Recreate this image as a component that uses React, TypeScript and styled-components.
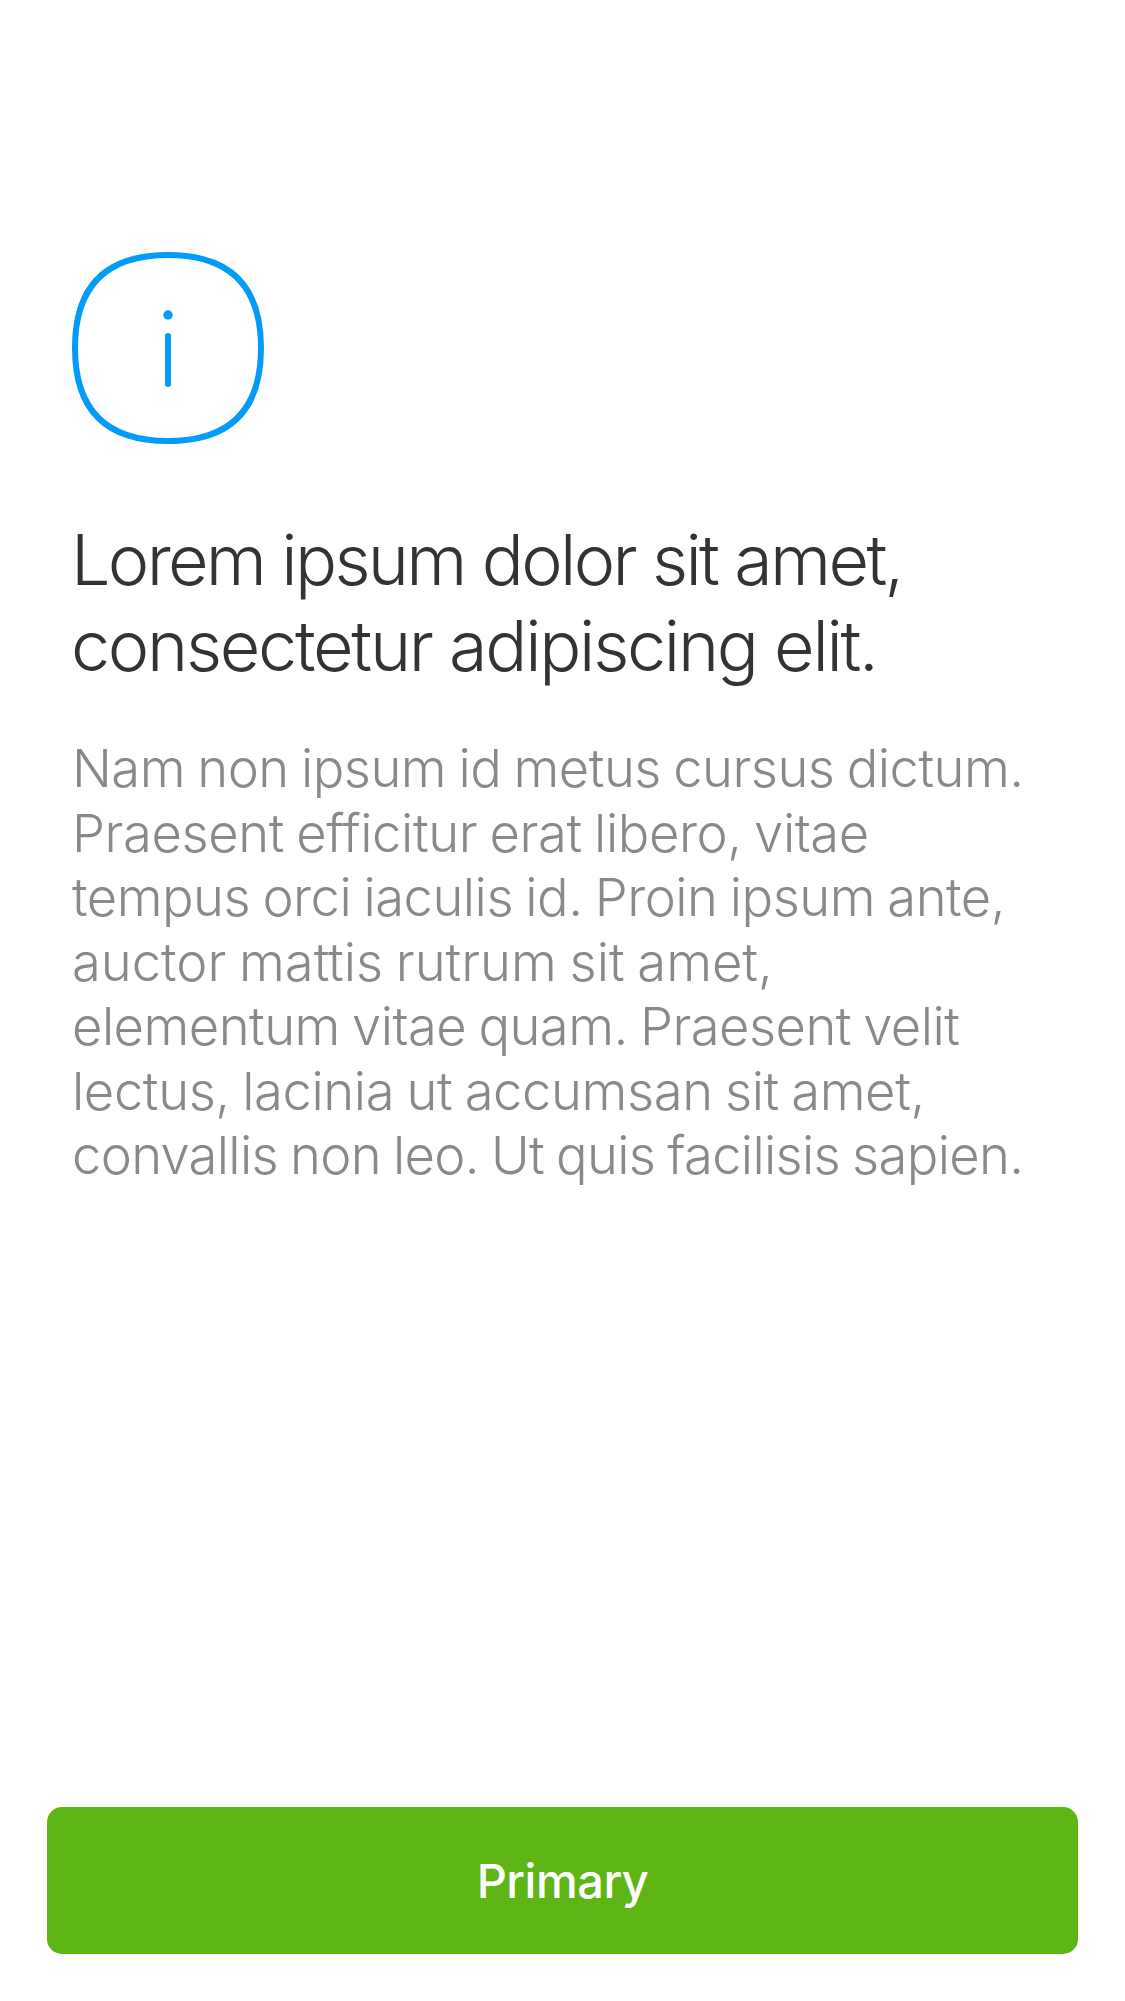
import React from "react";
import styled, { createGlobalStyle } from "styled-components";

const GlobalStyle = createGlobalStyle`
  * { box-sizing: border-box; }
  body { margin: 0; background: #fff; font-family: Inter, "Liberation Sans", sans-serif; }
`;

const Screen = styled.main`
  display: flex;
  flex-direction: column;
  justify-content: space-between;
  width: 1125px;
  height: 2001px;
  padding: 252px 47px 47px;
  background: #fff;
`;

const Content = styled.section`
  display: flex;
  flex-direction: column;
  padding-left: 25px;
`;

const InfoIcon = styled.svg`
  display: block;
  width: 192px;
  height: 192px;
`;

const Title = styled.h1`
  margin: 73px 0 0 -1px;
  color: #323336;
  font-size: 70px;
  font-weight: 300;
  line-height: 86px;
`;

const Body = styled.p`
  margin: 47px 0 0;
  color: #88898d;
  font-size: 52.5px;
  font-weight: 310;
  line-height: 64.5px;
  word-spacing: -2px;
`;

const Line = styled.span<{ $tracking: number }>`
  display: block;
  white-space: nowrap;
  font-variant-ligatures: none;
  letter-spacing: ${(p) => p.$tracking}px;
`;

const PrimaryButton = styled.button`
  height: 147px;
  padding: 0;
  border: 0;
  border-radius: 15px;
  background: #5db615;
  color: #fff;
  font-family: inherit;
  font-size: 47px;
  font-weight: 500;
  letter-spacing: -0.5px;
`;

const titleLines = [
  { text: "Lorem ipsum dolor sit amet,", tracking: -2.68 },
  { text: "consectetur adipiscing elit.", tracking: -2.28 },
];

const bodyLines = [
  { text: "Nam non ipsum id metus cursus dictum.", tracking: -0.5 },
  { text: "Praesent efficitur erat libero, vitae", tracking: -0.4 },
  { text: "tempus orci iaculis id. Proin ipsum ante,", tracking: -0.49 },
  { text: "auctor mattis rutrum sit amet,", tracking: -0.01 },
  { text: "elementum vitae quam. Praesent velit", tracking: -0.53 },
  { text: "lectus, lacinia ut accumsan sit amet,", tracking: -0.39 },
  { text: "convallis non leo. Ut quis facilisis sapien.", tracking: -0.67 },
];

export default function App() {
  return (
    <>
      <GlobalStyle />
      <Screen>
        <Content>
          <InfoIcon viewBox="0 0 192 192" fill="none" aria-hidden="true">
            <path
              d="M96 3C158 3 189 34 189 96S158 189 96 189S3 158 3 96S34 3 96 3Z"
              stroke="#009cf8"
              strokeWidth="6"
            />
            <circle cx="96" cy="63" r="4.7" fill="#009cf8" />
            <path d="M96 84V132" stroke="#009cf8" strokeWidth="6" strokeLinecap="round" />
          </InfoIcon>
          <Title>
            {titleLines.map((l) => (
              <Line key={l.text} $tracking={l.tracking}>{l.text}</Line>
            ))}
          </Title>
          <Body>
            {bodyLines.map((l) => (
              <Line key={l.text} $tracking={l.tracking}>{l.text}</Line>
            ))}
          </Body>
        </Content>
        <PrimaryButton type="button">Primary</PrimaryButton>
      </Screen>
    </>
  );
}
